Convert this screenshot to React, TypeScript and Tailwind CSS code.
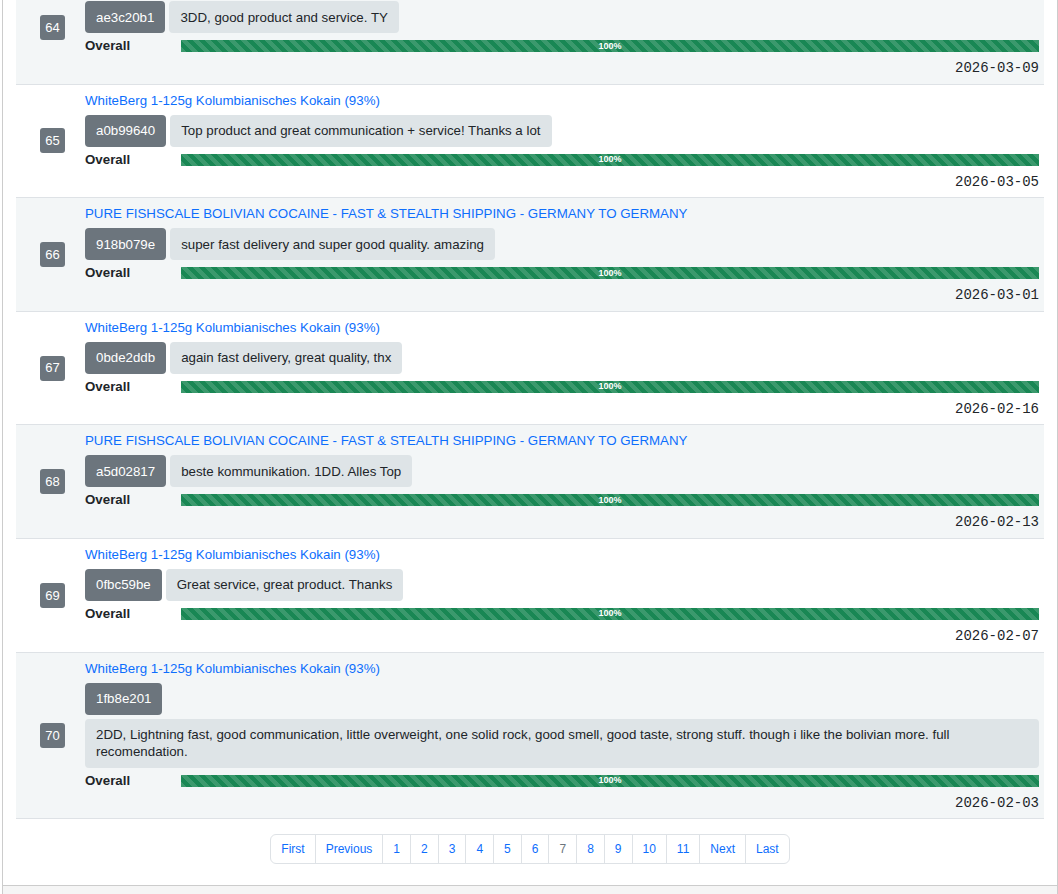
import React from "react";

type Review = {
  id: number;
  title: string;
  hash: string;
  comment: string;
  date: string;
};

const WB = "WhiteBerg 1-125g Kolumbianisches Kokain (93%)";
const PF = "PURE FISHSCALE BOLIVIAN COCAINE - FAST & STEALTH SHIPPING - GERMANY TO GERMANY";

const reviews: Review[] = [
  { id: 64, title: "", hash: "ae3c20b1", comment: "3DD, good product and service. TY", date: "2026-03-09" },
  { id: 65, title: WB, hash: "a0b99640", comment: "Top product and great communication + service! Thanks a lot", date: "2026-03-05" },
  { id: 66, title: PF, hash: "918b079e", comment: "super fast delivery and super good quality. amazing", date: "2026-03-01" },
  { id: 67, title: WB, hash: "0bde2ddb", comment: "again fast delivery, great quality, thx", date: "2026-02-16" },
  { id: 68, title: PF, hash: "a5d02817", comment: "beste kommunikation. 1DD. Alles Top", date: "2026-02-13" },
  { id: 69, title: WB, hash: "0fbc59be", comment: "Great service, great product. Thanks", date: "2026-02-07" },
  {
    id: 70,
    title: WB,
    hash: "1fb8e201",
    comment:
      "2DD, Lightning fast, good communication, little overweight, one solid rock, good smell, good taste, strong stuff. though i like the bolivian more. full recomendation.",
    date: "2026-02-03",
  },
];

const pages = ["First", "Previous", "1", "2", "3", "4", "5", "6", "7", "8", "9", "10", "11", "Next", "Last"];

function ReviewRow({ review, striped }: { review: Review; striped: boolean }) {
  return (
    <div className={`flex border-b border-[#dee2e6] ${striped ? "bg-[#f3f6f7]" : "bg-white"}`}>
      <div className="w-[69px] shrink-0 flex items-center pl-[24px]">
        <span className="w-[25px] h-[25px] rounded-[3px] bg-[#6c757d] text-white text-[13px] flex items-center justify-center">
          {review.id}
        </span>
      </div>
      <div className="flex-1 min-w-0 pr-[5px] pt-[6px] pb-[5.6px]">
        {review.title ? (
          <a href="#" className="block text-[13.3px] leading-[20px] text-[#0d6efd]">
            {review.title}
          </a>
        ) : (
          <div className="h-[20px]" />
        )}
        <div className="mt-[4px] flex flex-wrap gap-[4px] text-[13.3px] leading-[17px]">
          <span className="rounded-[4px] bg-[#6c757d] px-[11px] py-[7.5px] text-white">{review.hash}</span>
          <span className="rounded-[4px] bg-[#dee4e7] px-[11px] py-[7.5px] text-[#212529]">{review.comment}</span>
        </div>
        <div className="mt-[3px] flex items-center h-[20px]">
          <span className="w-[96px] shrink-0 text-[13.3px] font-bold text-[#212529]">Overall</span>
          <div className="flex-1 h-[12px] bg-[#198754] bg-[linear-gradient(45deg,rgba(255,255,255,.15)_25%,transparent_25%,transparent_50%,rgba(255,255,255,.15)_50%,rgba(255,255,255,.15)_75%,transparent_75%,transparent)] bg-[length:12px_12px] flex items-center justify-center text-[9px] leading-none font-bold text-white">
            100%
          </div>
        </div>
        <div className="mt-[2px] text-right text-[14px] leading-[20px] text-[#212529] font-['Liberation_Mono','Courier_New',monospace]">
          {review.date}
        </div>
      </div>
    </div>
  );
}

export default function App() {
  return (
    <div className="min-h-screen bg-white font-['Liberation_Sans',Arial,sans-serif] text-[#212529]">
      <div className="ml-[2px] w-[1056px] border-x border-[#cccccc] overflow-hidden">
        <div className="px-[13px] -mt-[29px]">
          {reviews.map((r, i) => (
            <ReviewRow key={r.id} review={r} striped={i % 2 === 0} />
          ))}
        </div>

        <div className="mt-[15px] flex justify-center">
          <ul className="flex text-[12px] leading-[18px]">
            {pages.map((p, i) => (
              <li
                key={p}
                className={`border border-[#dee2e6] px-[10px] py-[5px] ${i > 0 ? "-ml-px" : ""} ${
                  i === 0 ? "rounded-l-[6px]" : ""
                } ${i === pages.length - 1 ? "rounded-r-[6px]" : ""} ${
                  p === "7" ? "text-[#6c757d]" : "text-[#0d6efd]"
                }`}
              >
                {p}
              </li>
            ))}
          </ul>
        </div>

        <div className="mt-[21px] h-[40px] border-t border-[#cccccc] bg-[#f5f5f5]" />
      </div>
    </div>
  );
}
